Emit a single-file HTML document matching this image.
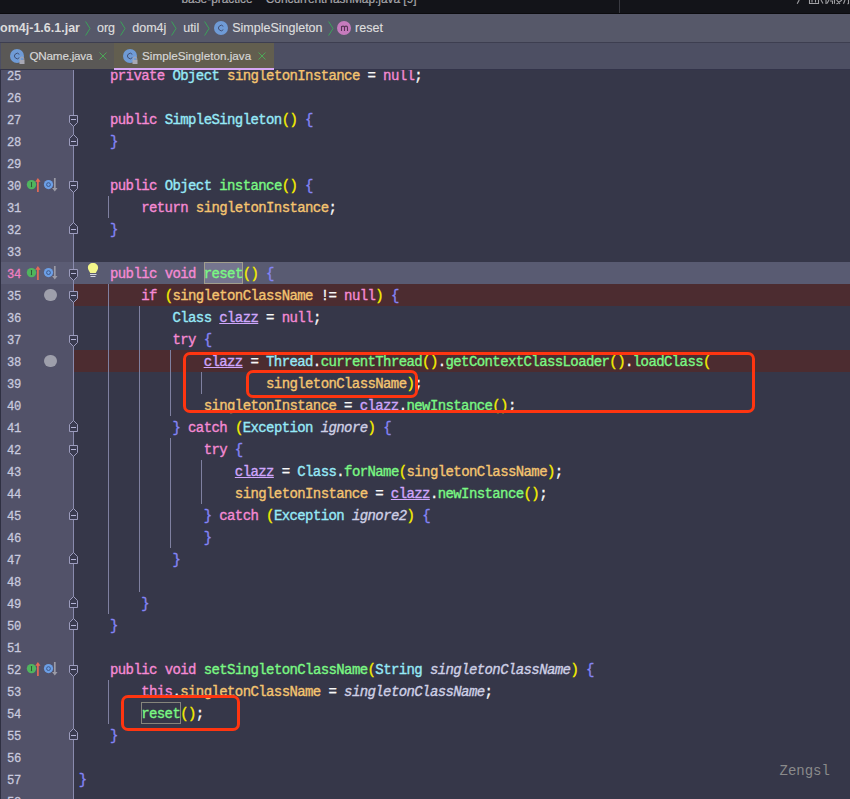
<!DOCTYPE html>
<html><head><meta charset="utf-8"><style>
*{margin:0;padding:0;box-sizing:border-box}
html,body{width:850px;height:799px;overflow:hidden;background:#363749}
body{position:relative;font-family:"Liberation Sans",sans-serif}
.a{position:absolute}
.code{position:absolute;left:0;top:0;width:850px;height:799px;overflow:hidden}
.ln{position:absolute;left:78.8px;height:22px;line-height:22px;white-space:pre;font-family:"Liberation Mono",monospace;font-size:14px;letter-spacing:-0.6px;color:#f4f4f4;-webkit-text-stroke:0.35px currentColor}
.num{position:absolute;left:6.5px;height:22px;line-height:22px;font-family:"Liberation Mono",monospace;font-size:13.5px;letter-spacing:-0.3px;color:#c8c9de;-webkit-text-stroke:0.3px currentColor;transform:scaleX(0.9);transform-origin:0 0}
.kw{color:#f58ad4}.ty{color:#96e9f7}.fn{color:#7af883}.fld{color:#f4c470}.par{color:#f5ee00}.br{color:#8585f7}.var{color:#cfa6fc}.tx{color:#f8f8f8}.prm{color:#cfd0e6;font-style:italic}
.varu{color:#cfa6fc;text-decoration:underline;text-underline-offset:0.5px;text-decoration-thickness:1px}
.guide{position:absolute;width:1px;background:#7f80a0}
.fold{position:absolute;left:69px;width:9px;height:12px}
.rb{position:absolute;border:3.4px solid #ff3510;border-radius:7px}
</style></head><body>

<div class="a" style="left:0;top:70px;width:73px;height:729px;background:#525269"></div>
<div class="a" style="left:0;top:42px;width:1px;height:757px;background:#2f3042"></div>
<div class="a" style="left:1px;top:262px;width:72px;height:22px;background:#5b5c74"></div>
<div class="a" style="left:74px;top:262px;width:776px;height:22px;background:#595b72"></div>
<div class="a" style="left:74px;top:284px;width:776px;height:22px;background:#4c2c30"></div>
<div class="a" style="left:74px;top:350px;width:776px;height:22px;background:#4c2c30"></div>
<div class="a" style="left:73px;top:70px;width:1px;height:729px;background:#8a8bae"></div>
<div class="guide" style="left:108.0px;top:196px;height:22px"></div>
<div class="guide" style="left:108.0px;top:284px;height:330px"></div>
<div class="guide" style="left:139.0px;top:306px;height:286px"></div>
<div class="guide" style="left:170.0px;top:350px;height:66px"></div>
<div class="guide" style="left:201.0px;top:372px;height:22px"></div>
<div class="guide" style="left:170.0px;top:438px;height:110px"></div>
<div class="guide" style="left:201.0px;top:460px;height:44px"></div>
<div class="guide" style="left:108.0px;top:680px;height:44px"></div>
<div class="a" style="left:204px;top:262px;width:39px;height:22px;background:#75758f;border:1px solid #a19e8e"></div>
<div class="a" style="left:141px;top:702px;width:40px;height:22px;border:1px solid #86857c"></div>
<div class="num" style="top:66px">25</div>
<div class="ln" style="top:65px">    <span class="kw">private</span><span class="tx"> </span><span class="ty">Object</span><span class="tx"> </span><span class="fld">singletonInstance</span><span class="tx"> = </span><span class="kw">null</span><span class="tx">;</span></div>
<div class="num" style="top:88px">26</div>
<div class="num" style="top:110px">27</div>
<div class="ln" style="top:109px">    <span class="kw">public</span><span class="tx"> </span><span class="ty">SimpleSingleton</span><span class="par">()</span><span class="tx"> </span><span class="br">{</span></div>
<div class="num" style="top:132px">28</div>
<div class="ln" style="top:131px">    <span class="br">}</span></div>
<div class="num" style="top:154px">29</div>
<div class="num" style="top:176px">30</div>
<div class="ln" style="top:175px">    <span class="kw">public</span><span class="tx"> </span><span class="ty">Object</span><span class="tx"> </span><span class="fn">instance</span><span class="par">()</span><span class="tx"> </span><span class="br">{</span></div>
<div class="num" style="top:198px">31</div>
<div class="ln" style="top:197px">        <span class="kw">return</span><span class="tx"> </span><span class="fld">singletonInstance</span><span class="tx">;</span></div>
<div class="num" style="top:220px">32</div>
<div class="ln" style="top:219px">    <span class="br">}</span></div>
<div class="num" style="top:242px">33</div>
<div class="num" style="top:264px;color:#f27fc2">34</div>
<div class="ln" style="top:263px">    <span class="kw">public</span><span class="tx"> </span><span class="kw">void</span><span class="tx"> </span><span class="fn">reset</span><span class="par">()</span><span class="tx"> </span><span class="br">{</span></div>
<div class="num" style="top:286px">35</div>
<div class="ln" style="top:285px">        <span class="kw">if</span><span class="tx"> </span><span class="par">(</span><span class="fld">singletonClassName</span><span class="tx"> != </span><span class="kw">null</span><span class="par">)</span><span class="tx"> </span><span class="br">{</span></div>
<div class="num" style="top:308px">36</div>
<div class="ln" style="top:307px">            <span class="ty">Class</span><span class="tx"> </span><span class="varu">clazz</span><span class="tx"> = </span><span class="kw">null</span><span class="tx">;</span></div>
<div class="num" style="top:330px">37</div>
<div class="ln" style="top:329px">            <span class="kw">try</span><span class="tx"> </span><span class="br">{</span></div>
<div class="num" style="top:352px">38</div>
<div class="ln" style="top:351px">                <span class="varu">clazz</span><span class="tx"> = </span><span class="ty">Thread</span><span class="tx">.</span><span class="fn">currentThread</span><span class="par">()</span><span class="tx">.</span><span class="fn">getContextClassLoader</span><span class="par">()</span><span class="tx">.</span><span class="fn">loadClass</span><span class="par">(</span></div>
<div class="num" style="top:374px">39</div>
<div class="ln" style="top:373px">                        <span class="fld">singletonClassName</span><span class="par">)</span><span class="tx">;</span></div>
<div class="num" style="top:396px">40</div>
<div class="ln" style="top:395px">                <span class="fld">singletonInstance</span><span class="tx"> = </span><span class="varu">clazz</span><span class="tx">.</span><span class="fn">newInstance</span><span class="par">()</span><span class="tx">;</span></div>
<div class="num" style="top:418px">41</div>
<div class="ln" style="top:417px">            <span class="br">}</span><span class="tx"> </span><span class="kw">catch</span><span class="tx"> </span><span class="par">(</span><span class="ty">Exception</span><span class="tx"> </span><span class="prm">ignore</span><span class="par">)</span><span class="tx"> </span><span class="br">{</span></div>
<div class="num" style="top:440px">42</div>
<div class="ln" style="top:439px">                <span class="kw">try</span><span class="tx"> </span><span class="br">{</span></div>
<div class="num" style="top:462px">43</div>
<div class="ln" style="top:461px">                    <span class="varu">clazz</span><span class="tx"> = </span><span class="ty">Class</span><span class="tx">.</span><span class="fn">forName</span><span class="par">(</span><span class="fld">singletonClassName</span><span class="par">)</span><span class="tx">;</span></div>
<div class="num" style="top:484px">44</div>
<div class="ln" style="top:483px">                    <span class="fld">singletonInstance</span><span class="tx"> = </span><span class="varu">clazz</span><span class="tx">.</span><span class="fn">newInstance</span><span class="par">()</span><span class="tx">;</span></div>
<div class="num" style="top:506px">45</div>
<div class="ln" style="top:505px">                <span class="br">}</span><span class="tx"> </span><span class="kw">catch</span><span class="tx"> </span><span class="par">(</span><span class="ty">Exception</span><span class="tx"> </span><span class="prm">ignore2</span><span class="par">)</span><span class="tx"> </span><span class="br">{</span></div>
<div class="num" style="top:528px">46</div>
<div class="ln" style="top:527px">                <span class="br">}</span></div>
<div class="num" style="top:550px">47</div>
<div class="ln" style="top:549px">            <span class="br">}</span></div>
<div class="num" style="top:572px">48</div>
<div class="num" style="top:594px">49</div>
<div class="ln" style="top:593px">        <span class="br">}</span></div>
<div class="num" style="top:616px">50</div>
<div class="ln" style="top:615px">    <span class="br">}</span></div>
<div class="num" style="top:638px">51</div>
<div class="num" style="top:660px">52</div>
<div class="ln" style="top:659px">    <span class="kw">public</span><span class="tx"> </span><span class="kw">void</span><span class="tx"> </span><span class="fn">setSingletonClassName</span><span class="par">(</span><span class="ty">String</span><span class="tx"> </span><span class="prm">singletonClassName</span><span class="par">)</span><span class="tx"> </span><span class="br">{</span></div>
<div class="num" style="top:682px">53</div>
<div class="ln" style="top:681px">        <span class="kw">this</span><span class="tx">.</span><span class="fld">singletonClassName</span><span class="tx"> = </span><span class="prm">singletonClassName</span><span class="tx">;</span></div>
<div class="num" style="top:704px">54</div>
<div class="ln" style="top:703px">        <span class="fn">reset</span><span class="par">()</span><span class="tx">;</span></div>
<div class="num" style="top:726px">55</div>
<div class="ln" style="top:725px">    <span class="br">}</span></div>
<div class="num" style="top:748px">56</div>
<div class="num" style="top:770px">57</div>
<div class="ln" style="top:769px"><span class="br">}</span></div>
<div class="num" style="top:792px">58</div>
<svg class="fold" style="top:115px" viewBox="0 0 9 12"><path d="M0.5,0.5 H8.5 V7.5 L4.5,11.5 L0.5,7.5 Z" fill="#3a3b50" stroke="#9c9cbd" stroke-width="1"/><path d="M2,4.5 H7" stroke="#b4b4d6" stroke-width="1"/></svg>
<svg class="fold" style="top:181px" viewBox="0 0 9 12"><path d="M0.5,0.5 H8.5 V7.5 L4.5,11.5 L0.5,7.5 Z" fill="#3a3b50" stroke="#9c9cbd" stroke-width="1"/><path d="M2,4.5 H7" stroke="#b4b4d6" stroke-width="1"/></svg>
<svg class="fold" style="top:269px" viewBox="0 0 9 12"><path d="M0.5,0.5 H8.5 V7.5 L4.5,11.5 L0.5,7.5 Z" fill="#3a3b50" stroke="#9c9cbd" stroke-width="1"/><path d="M2,4.5 H7" stroke="#b4b4d6" stroke-width="1"/></svg>
<svg class="fold" style="top:291px" viewBox="0 0 9 12"><path d="M0.5,0.5 H8.5 V7.5 L4.5,11.5 L0.5,7.5 Z" fill="#3a3b50" stroke="#9c9cbd" stroke-width="1"/><path d="M2,4.5 H7" stroke="#b4b4d6" stroke-width="1"/></svg>
<svg class="fold" style="top:335px" viewBox="0 0 9 12"><path d="M0.5,0.5 H8.5 V7.5 L4.5,11.5 L0.5,7.5 Z" fill="#3a3b50" stroke="#9c9cbd" stroke-width="1"/><path d="M2,4.5 H7" stroke="#b4b4d6" stroke-width="1"/></svg>
<svg class="fold" style="top:445px" viewBox="0 0 9 12"><path d="M0.5,0.5 H8.5 V7.5 L4.5,11.5 L0.5,7.5 Z" fill="#3a3b50" stroke="#9c9cbd" stroke-width="1"/><path d="M2,4.5 H7" stroke="#b4b4d6" stroke-width="1"/></svg>
<svg class="fold" style="top:665px" viewBox="0 0 9 12"><path d="M0.5,0.5 H8.5 V7.5 L4.5,11.5 L0.5,7.5 Z" fill="#3a3b50" stroke="#9c9cbd" stroke-width="1"/><path d="M2,4.5 H7" stroke="#b4b4d6" stroke-width="1"/></svg>
<svg class="fold" style="top:134px" viewBox="0 0 9 12"><path d="M0.5,11.5 H8.5 V4.5 L4.5,0.5 L0.5,4.5 Z" fill="#3a3b50" stroke="#9c9cbd" stroke-width="1"/><path d="M2,7.5 H7" stroke="#b4b4d6" stroke-width="1"/></svg>
<svg class="fold" style="top:222px" viewBox="0 0 9 12"><path d="M0.5,11.5 H8.5 V4.5 L4.5,0.5 L0.5,4.5 Z" fill="#3a3b50" stroke="#9c9cbd" stroke-width="1"/><path d="M2,7.5 H7" stroke="#b4b4d6" stroke-width="1"/></svg>
<svg class="fold" style="top:420px" viewBox="0 0 9 12"><path d="M0.5,11.5 H8.5 V4.5 L4.5,0.5 L0.5,4.5 Z" fill="#3a3b50" stroke="#9c9cbd" stroke-width="1"/><path d="M2,7.5 H7" stroke="#b4b4d6" stroke-width="1"/></svg>
<svg class="fold" style="top:508px" viewBox="0 0 9 12"><path d="M0.5,11.5 H8.5 V4.5 L4.5,0.5 L0.5,4.5 Z" fill="#3a3b50" stroke="#9c9cbd" stroke-width="1"/><path d="M2,7.5 H7" stroke="#b4b4d6" stroke-width="1"/></svg>
<svg class="fold" style="top:552px" viewBox="0 0 9 12"><path d="M0.5,11.5 H8.5 V4.5 L4.5,0.5 L0.5,4.5 Z" fill="#3a3b50" stroke="#9c9cbd" stroke-width="1"/><path d="M2,7.5 H7" stroke="#b4b4d6" stroke-width="1"/></svg>
<svg class="fold" style="top:596px" viewBox="0 0 9 12"><path d="M0.5,11.5 H8.5 V4.5 L4.5,0.5 L0.5,4.5 Z" fill="#3a3b50" stroke="#9c9cbd" stroke-width="1"/><path d="M2,7.5 H7" stroke="#b4b4d6" stroke-width="1"/></svg>
<svg class="fold" style="top:618px" viewBox="0 0 9 12"><path d="M0.5,11.5 H8.5 V4.5 L4.5,0.5 L0.5,4.5 Z" fill="#3a3b50" stroke="#9c9cbd" stroke-width="1"/><path d="M2,7.5 H7" stroke="#b4b4d6" stroke-width="1"/></svg>
<svg class="fold" style="top:728px" viewBox="0 0 9 12"><path d="M0.5,11.5 H8.5 V4.5 L4.5,0.5 L0.5,4.5 Z" fill="#3a3b50" stroke="#9c9cbd" stroke-width="1"/><path d="M2,7.5 H7" stroke="#b4b4d6" stroke-width="1"/></svg>
<svg class="a" style="left:25px;top:177px" width="36" height="16" viewBox="0 0 36 16">
<circle cx="6.5" cy="7.6" r="4.7" fill="#50b55e"/><path d="M6.5,5.6 V9.6 M5.9,5.6 H7.1 M5.9,9.6 H7.1" stroke="#2c4f33" stroke-width="0.9"/>
<path d="M12.9,15 V4" stroke="#e46a56" stroke-width="1.7"/><path d="M10.3,4.8 L12.9,1 L15.5,4.8 Z" fill="#e46a56"/>
<circle cx="23.5" cy="7.6" r="4.6" fill="#6c9fe6"/><circle cx="23.5" cy="7.6" r="1.9" fill="none" stroke="#3e5a8c" stroke-width="1"/>
<path d="M29.8,1 V12" stroke="#9b9ba6" stroke-width="1.7"/><path d="M27.1,11.1 L29.8,14.4 L32.5,11.1 Z" fill="#9b9ba6"/>
</svg>
<svg class="a" style="left:25px;top:265px" width="36" height="16" viewBox="0 0 36 16">
<circle cx="6.5" cy="7.6" r="4.7" fill="#50b55e"/><path d="M6.5,5.6 V9.6 M5.9,5.6 H7.1 M5.9,9.6 H7.1" stroke="#2c4f33" stroke-width="0.9"/>
<path d="M12.9,15 V4" stroke="#e46a56" stroke-width="1.7"/><path d="M10.3,4.8 L12.9,1 L15.5,4.8 Z" fill="#e46a56"/>
<circle cx="23.5" cy="7.6" r="4.6" fill="#6c9fe6"/><circle cx="23.5" cy="7.6" r="1.9" fill="none" stroke="#3e5a8c" stroke-width="1"/>
<path d="M29.8,1 V12" stroke="#9b9ba6" stroke-width="1.7"/><path d="M27.1,11.1 L29.8,14.4 L32.5,11.1 Z" fill="#9b9ba6"/>
</svg>
<svg class="a" style="left:25px;top:661px" width="36" height="16" viewBox="0 0 36 16">
<circle cx="6.5" cy="7.6" r="4.7" fill="#50b55e"/><path d="M6.5,5.6 V9.6 M5.9,5.6 H7.1 M5.9,9.6 H7.1" stroke="#2c4f33" stroke-width="0.9"/>
<path d="M12.9,15 V4" stroke="#e46a56" stroke-width="1.7"/><path d="M10.3,4.8 L12.9,1 L15.5,4.8 Z" fill="#e46a56"/>
<circle cx="23.5" cy="7.6" r="4.6" fill="#6c9fe6"/><circle cx="23.5" cy="7.6" r="1.9" fill="none" stroke="#3e5a8c" stroke-width="1"/>
<path d="M29.8,1 V12" stroke="#9b9ba6" stroke-width="1.7"/><path d="M27.1,11.1 L29.8,14.4 L32.5,11.1 Z" fill="#9b9ba6"/>
</svg>
<div class="a" style="left:44.4px;top:288.5px;width:12.8px;height:12.8px;border-radius:50%;background:#9e9fab"></div>
<div class="a" style="left:44.4px;top:354.5px;width:12.8px;height:12.8px;border-radius:50%;background:#9e9fab"></div>
<svg class="a" style="left:87px;top:262px" width="12" height="16" viewBox="0 0 12 16">
<path d="M6,0.9 C9.2,0.9 11.1,3 11.1,5.6 C11.1,7.7 9.9,8.8 8.8,11 L3.2,11 C2.1,8.8 0.9,7.7 0.9,5.6 C0.9,3 2.8,0.9 6,0.9 Z" fill="#f3f68a"/>
<path d="M3,12.5 H9.5 M3.5,14.5 H8.5" stroke="#d2d2de" stroke-width="1"/></svg>
<div class="rb" style="left:182.7px;top:352.1px;width:572.6px;height:60.9px"></div>
<div class="rb" style="left:246.3px;top:370px;width:171.8px;height:27.5px"></div>
<div class="rb" style="left:120.6px;top:695px;width:119.7px;height:36.2px"></div>
<div class="a" style="left:779.5px;top:762px;font-family:'Liberation Mono',monospace;font-size:14px;color:#8a8a8b;line-height:18px">Zengsl</div>
<div class="a" style="left:0;top:0;width:850px;height:13px;background:#131419;overflow:hidden"><div class="a" style="left:181.5px;top:-9px;font-size:11.85px;line-height:16px;color:#a6a6aa;-webkit-text-stroke:0.2px currentColor;white-space:nowrap">base-practice – ConcurrentHashMap.java [9]</div><div class="a" style="left:619px;top:0;width:1px;height:13px;background:#3a3b42"></div><svg class="a" style="left:796px;top:0" width="54" height="6" viewBox="0 0 54 6"><g stroke="#a0a0a4" stroke-width="1.1" fill="none"><path d="M3.2,0 L1.2,3.8"/><path d="M13.5,0 V3.5 H22.5 V0 M16,0 V2.5 M19.5,0 V2.5"/><path d="M25,0 L27,3.6 M30,0 V4 M33,0 L31,3.5 M34,1 H36.5 V4"/><path d="M38.5,0 V3.8 M40.5,0 L44,3.8 M46,0 L40.5,4"/><path d="M49,0 L47.5,3.8 M52.5,0 V3.5 L51.5,4"/></g></svg></div>
<div class="a" style="left:0;top:13px;width:850px;height:1px;background:#0b0b0e"></div>
<div class="a" style="left:0;top:14px;width:850px;height:28px;background:#565869"></div>
<div class="a" style="left:0;top:42px;width:850px;height:1px;background:#3d3e50"></div>
<div class="a" style="left:-7.6px;top:18px;font-size:12.5px;font-weight:bold;line-height:20px;color:#dcdcdc;white-space:nowrap">dom4j-1.6.1.jar</div>
<svg class="a" style="left:85.0px;top:21px" width="6" height="15" viewBox="0 0 6 15"><path d="M0.6,0.5 L5,7.5 L0.6,14.5" fill="none" stroke="#3ca25a" stroke-width="1"/></svg>
<svg class="a" style="left:120.0px;top:21px" width="6" height="15" viewBox="0 0 6 15"><path d="M0.6,0.5 L5,7.5 L0.6,14.5" fill="none" stroke="#3ca25a" stroke-width="1"/></svg>
<svg class="a" style="left:171.0px;top:21px" width="6" height="15" viewBox="0 0 6 15"><path d="M0.6,0.5 L5,7.5 L0.6,14.5" fill="none" stroke="#3ca25a" stroke-width="1"/></svg>
<svg class="a" style="left:204.0px;top:21px" width="6" height="15" viewBox="0 0 6 15"><path d="M0.6,0.5 L5,7.5 L0.6,14.5" fill="none" stroke="#3ca25a" stroke-width="1"/></svg>
<svg class="a" style="left:327.6px;top:21px" width="6" height="15" viewBox="0 0 6 15"><path d="M0.6,0.5 L5,7.5 L0.6,14.5" fill="none" stroke="#3ca25a" stroke-width="1"/></svg>
<div class="a" style="left:97.0px;top:18px;font-size:12.5px;line-height:20px;color:#dedede;-webkit-text-stroke:0.15px currentColor;white-space:nowrap">org</div>
<div class="a" style="left:132.3px;top:18px;font-size:12.5px;line-height:20px;color:#dedede;-webkit-text-stroke:0.15px currentColor;white-space:nowrap">dom4j</div>
<div class="a" style="left:183.2px;top:18px;font-size:12.5px;line-height:20px;color:#dedede;-webkit-text-stroke:0.15px currentColor;white-space:nowrap">util</div>
<div class="a" style="left:232.2px;top:18px;font-size:12.5px;line-height:20px;color:#dedede;-webkit-text-stroke:0.15px currentColor;white-space:nowrap">SimpleSingleton</div>
<div class="a" style="left:355.1px;top:18px;font-size:12.5px;line-height:20px;color:#dedede;-webkit-text-stroke:0.15px currentColor;white-space:nowrap">reset</div>
<svg class="a" style="left:214px;top:21px" width="14" height="14" viewBox="0 0 14 14"><circle cx="7" cy="7" r="7" fill="#6f9bd6"/><path d="M9.3,5.3 A2.7,2.7 0 1 0 9.3,8.7" fill="none" stroke="#3e4c70" stroke-width="0.95"/></svg>
<svg class="a" style="left:337px;top:21px" width="14" height="14" viewBox="0 0 14 14"><circle cx="7" cy="7" r="7" fill="#c67bbd"/><path d="M4.5,9.9 V5 M4.5,6.6 C4.5,5.5 5.2,5.1 6,5.1 C6.8,5.1 7.5,5.5 7.5,6.6 V9.9 M7.5,6.6 C7.5,5.5 8.2,5.1 9,5.1 C9.8,5.1 10.5,5.5 10.5,6.6 V9.9" fill="none" stroke="#583456" stroke-width="1.1"/></svg>
<div class="a" style="left:0;top:43px;width:850px;height:26px;background:#4d4f63"></div>
<div class="a" style="left:0;top:69px;width:850px;height:1px;background:#33344a"></div>
<div class="a" style="left:1px;top:43px;width:113px;height:26px;background:#5a5856"></div>
<div class="a" style="left:0;top:69px;width:114px;height:1px;background:#34354a"></div>
<div class="a" style="left:114px;top:43px;width:160px;height:25px;background:#625e4f"></div>
<div class="a" style="left:114px;top:68px;width:160px;height:2px;background:#d5a6f5"></div>
<svg class="a" style="left:8.7px;top:48px" width="18" height="18" viewBox="0 0 18 18"><circle cx="8" cy="8" r="7" fill="#6f9bd6"/><path d="M10.3,6.3 A2.7,2.7 0 1 0 10.3,9.7" fill="none" stroke="#3e4c70" stroke-width="0.95"/><path d="M11.2,12 V10.8 A1.8,1.8 0 0 1 14.8,10.8 V12" fill="none" stroke="#a8a8b4" stroke-width="1"/><rect x="10.5" y="12" width="5" height="4" fill="#a8a8b4"/></svg>
<svg class="a" style="left:121.6px;top:48px" width="18" height="18" viewBox="0 0 18 18"><circle cx="8" cy="8" r="7" fill="#6f9bd6"/><path d="M10.3,6.3 A2.7,2.7 0 1 0 10.3,9.7" fill="none" stroke="#3e4c70" stroke-width="0.95"/><path d="M11.2,12 V10.8 A1.8,1.8 0 0 1 14.8,10.8 V12" fill="none" stroke="#a8a8b4" stroke-width="1"/><rect x="10.5" y="12" width="5" height="4" fill="#a8a8b4"/></svg>
<div class="a" style="left:29.5px;top:46px;font-size:11.7px;letter-spacing:-0.22px;line-height:20px;color:#d8d8d8;-webkit-text-stroke:0.15px currentColor;white-space:nowrap">QName.java</div>
<div class="a" style="left:142px;top:46px;font-size:11.7px;line-height:20px;color:#d8d8d8;-webkit-text-stroke:0.15px currentColor;white-space:nowrap">SimpleSingleton.java</div>
<svg class="a" style="left:99.0px;top:52px" width="8" height="8" viewBox="0 0 8 8"><path d="M0.5,0.5 L7.5,7.5 M7.5,0.5 L0.5,7.5" stroke="#4cab57" stroke-width="0.95"/></svg>
<svg class="a" style="left:258.0px;top:52px" width="8" height="8" viewBox="0 0 8 8"><path d="M0.5,0.5 L7.5,7.5 M7.5,0.5 L0.5,7.5" stroke="#4cab57" stroke-width="0.95"/></svg>
</body></html>
